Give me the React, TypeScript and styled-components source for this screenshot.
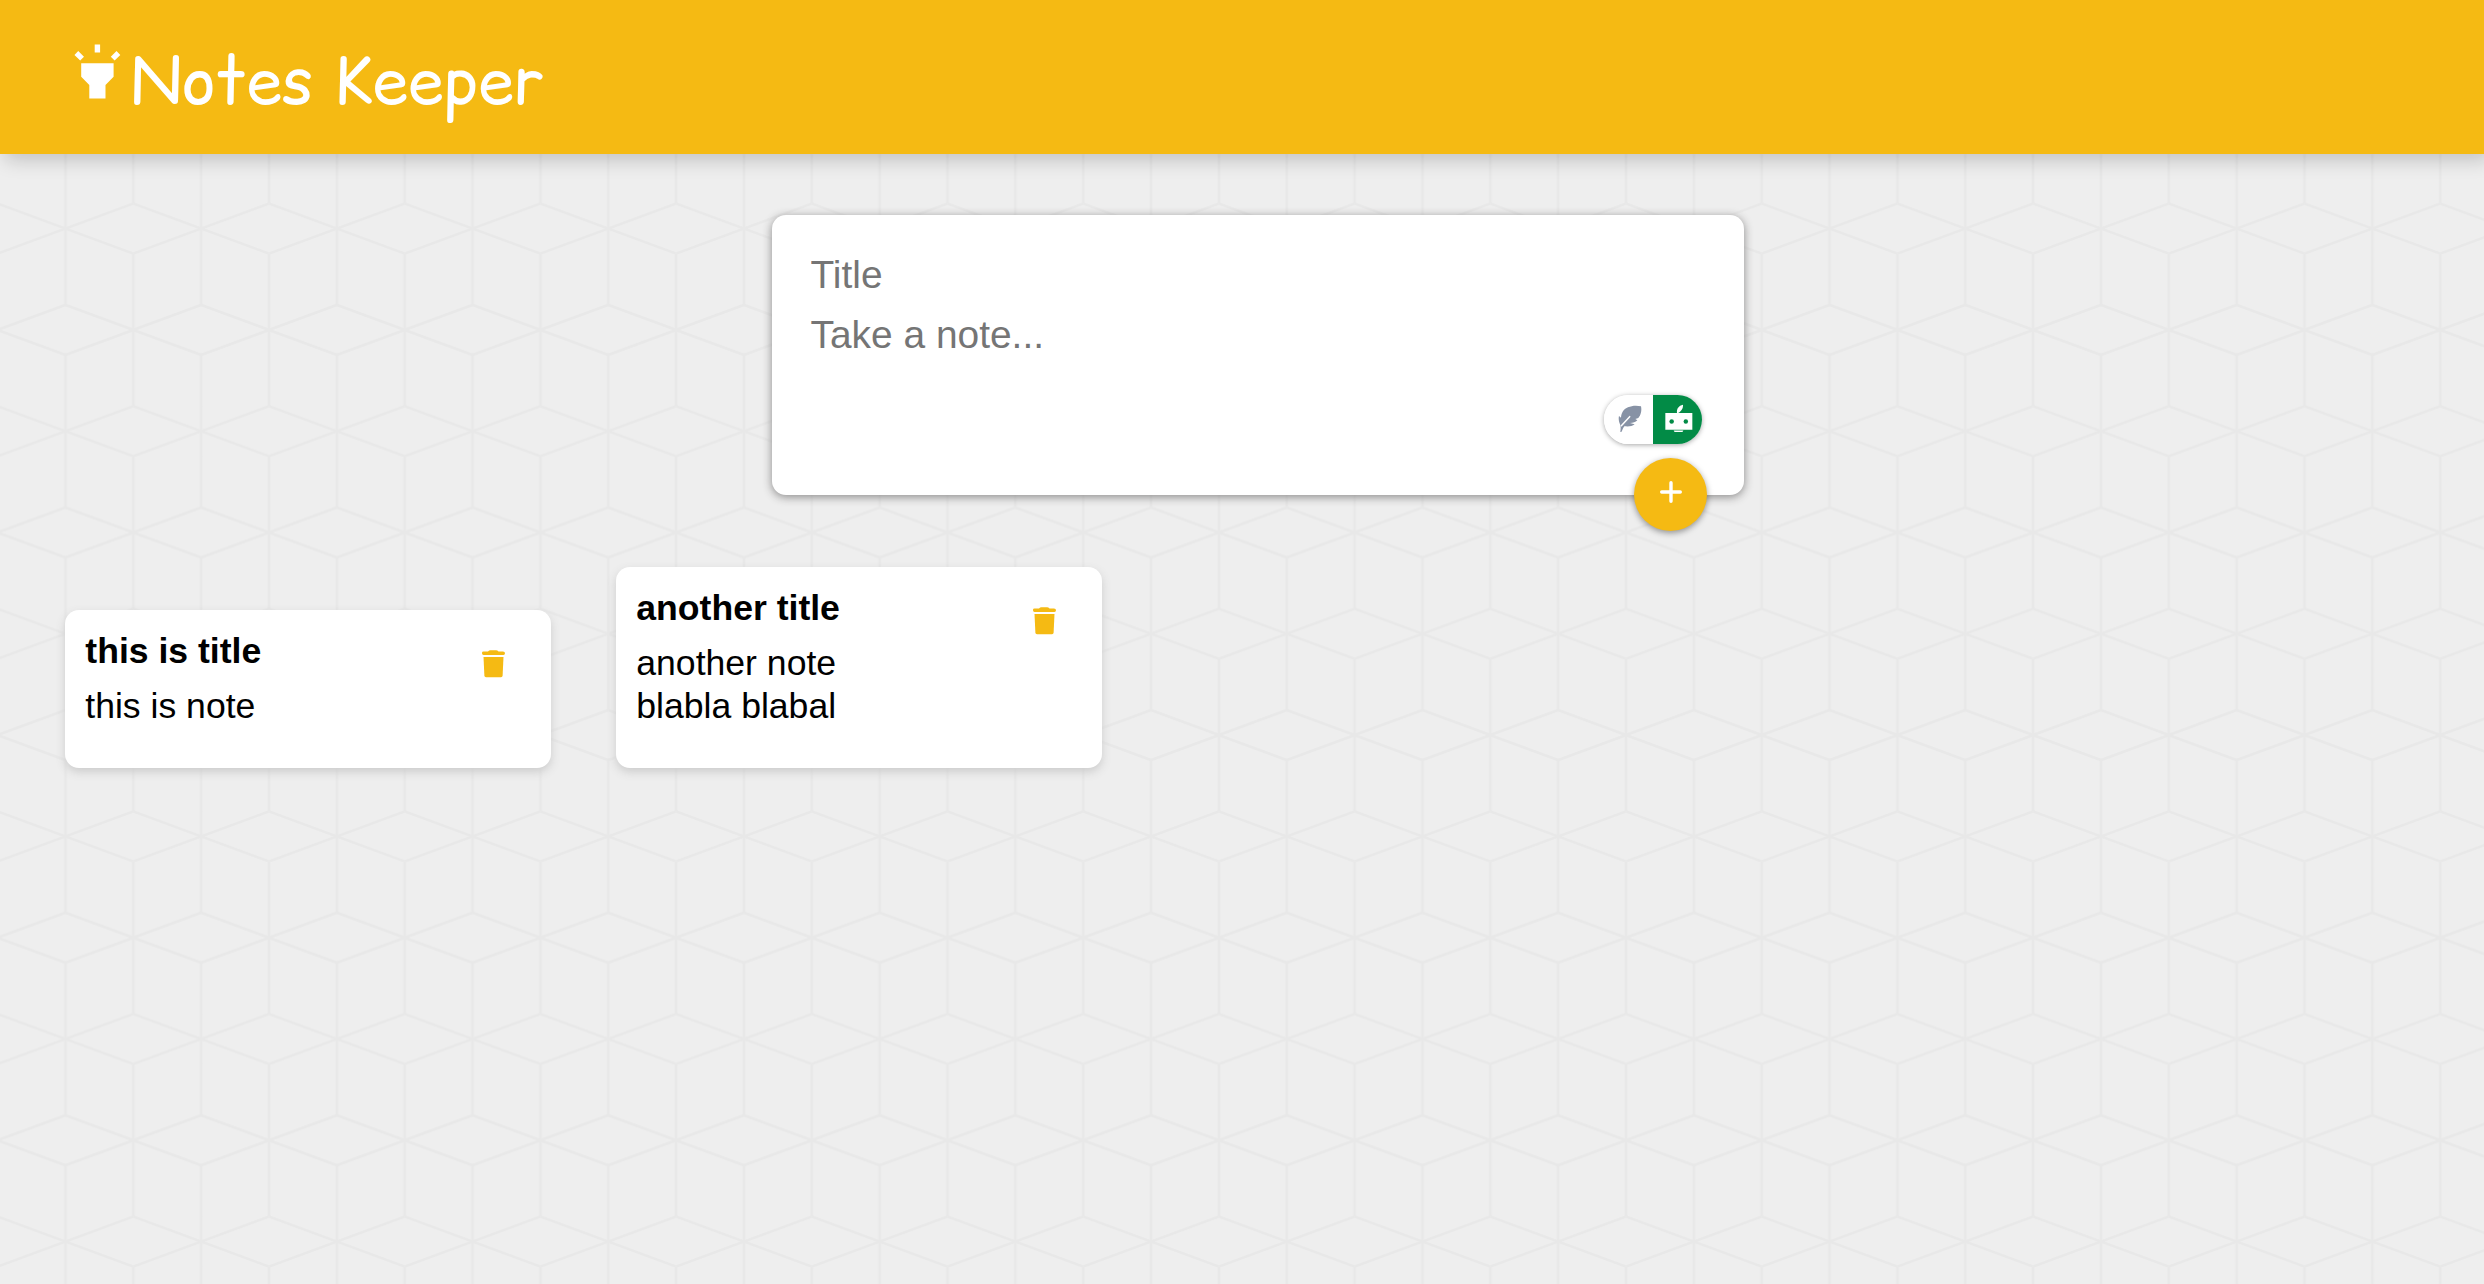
import React from "react";
import styled, { createGlobalStyle } from "styled-components";
import { MdHighlight } from "react-icons/md";

const GlobalStyle = createGlobalStyle`
  * { box-sizing: border-box; }
  html, body, #root { height: 100%; }
  body {
    margin: 0;
    overflow: hidden;
    background: #eee;
    font-family: "Liberation Sans", Arial, sans-serif;
  }
`;

const Page = styled.div`
  position: relative;
  min-height: 100%;
  display: flex;
  flex-direction: column;
`;

const Backdrop = styled.svg`
  position: absolute;
  inset: 0;
  width: 100%;
  height: 100%;
  z-index: -1;
`;

const Header = styled.header`
  display: flex;
  align-items: flex-start;
  height: 154px;
  padding: 38.5px 64.8px 0;
  color: #fff;
  background: #f5ba13;
  box-shadow: 5px 6px 18px rgba(0, 0, 0, 0.19);
`;

const Logo = styled.h1`
  display: flex;
  align-items: flex-start;
  margin: 0;
  font-weight: 400;
`;

const LogoText = styled.span`
  margin: -2px 0 0 0.5px;
  font-family: "Comic Relief", "Comic Sans MS", "Comic Neue", cursive;
  font-size: 64.8px;
  line-height: 88px;
`;

const Form = styled.form`
  position: relative;
  display: flex;
  flex-direction: column;
  width: 972px;
  height: 280px;
  margin: 60.5px 0 0 772px;
  padding: 30px;
  border-radius: 14px;
  background: #fff;
  box-shadow: 0 2px 10px rgb(138, 137, 137);
`;

const fieldStyle = `
  width: 100%;
  border: 0;
  outline: 0;
  padding: 8px 8.5px;
  resize: none;
  background: transparent;
  font-family: inherit;
  font-size: 38.9px;
  line-height: 44px;
  &::placeholder { color: #757575; opacity: 1; }
`;

const TitleInput = styled.input`
  ${fieldStyle}
  height: 60px;
`;

const NoteInput = styled.textarea`
  ${fieldStyle}
  height: 148px;
`;

const Assistant = styled.div`
  position: absolute;
  right: 42.5px;
  top: 180px;
  display: flex;
  width: 98px;
  height: 49px;
  border-radius: 25px;
  overflow: hidden;
  box-shadow: 0 1px 5px rgba(0, 0, 0, 0.35);
`;

const AssistantHalf = styled.span<{ $active?: boolean }>`
  flex: 1;
  background: ${(p) => (p.$active ? "#028b46" : "#fff")};
  svg { display: block; }
`;

const AddButton = styled.button`
  position: absolute;
  right: 36.7px;
  bottom: -36.5px;
  display: flex;
  justify-content: center;
  padding: 22px 0 0;
  width: 73px;
  height: 73px;
  border: 0;
  border-radius: 50%;
  color: #fff;
  background: #f5ba13;
  box-shadow: 0 2px 6px rgba(0, 0, 0, 0.4);
`;

const Notes = styled.main`
  display: flex;
  align-items: flex-end;
  gap: 65px;
  margin: 72.5px 65px 0;
`;

const Card = styled.article`
  display: flex;
  align-items: flex-start;
  justify-content: space-between;
  width: 486px;
  padding: 20.3px 34px 40px 20.3px;
  border-radius: 14px;
  background: #fff;
  box-shadow: 0 4px 10px #ccc;
`;

const CardTitle = styled.h2`
  margin: 0 0 12px;
  font-size: 35.6px;
  line-height: 43px;
`;

const CardBody = styled.p`
  margin: 0;
  font-size: 35.6px;
  line-height: 43px;
  white-space: pre-line;
`;

const DeleteButton = styled.button`
  margin: 16px 0 0;
  padding: 0;
  border: 0;
  background: none;
  svg { display: block; }
`;

const Cubes = () => (
  <Backdrop>
    <defs>
      <pattern id="cubes" width="135.7" height="202.6" patternUnits="userSpaceOnUse" x="-2.4" y="127.3">
        <g fill="none" stroke="#e8e8e8" strokeWidth="2.6">
          <path d="M0 0L67.85 -25L135.7 0L67.85 25ZM0 202.6L67.85 177.6L135.7 202.6L67.85 227.6Z" />
          <path d="M0 76.3L135.7 126.3M0 126.3L135.7 76.3" />
          <path d="M67.85 25V177.6M0 0V76.3M135.7 0V76.3M0 126.3V202.6M135.7 126.3V202.6" />
        </g>
      </pattern>
    </defs>
    <rect width="100%" height="100%" fill="url(#cubes)" />
  </Backdrop>
);

const Plus = () => (
  <svg width="24" height="24" viewBox="0 0 24 24">
    <path d="M12 2.7V21.3M2.7 12H21.3" stroke="#fff" strokeWidth="3.4" strokeLinecap="round" />
  </svg>
);

const Trash = () => (
  <svg width="48" height="48" viewBox="0 0 48 48" fill="#f5ba13">
    <path d="M13 6.8Q13 5.5 14.5 5.5H19Q20 4.2 21.5 4.2H27Q28.5 4.2 29.5 5.5H34Q36 5.5 36 7.2Q36 9 34.5 9H14.5Q13 9 13 7.2Z" />
    <path d="M14.5 11H34.5L33.6 29.8Q33.5 31.2 32 31.2H17Q15.5 31.2 15.4 29.8Z" />
  </svg>
);

const Feather = () => (
  <svg width="49" height="49" viewBox="0 0 147 147">
    <path
      fill="#8792a5"
      d="M49 111C50 102 51 96 48 88C43 76 44 66 45 63L51 68C52 52 60 42 72 37C84 31 100 31 111 34C114 48 110 61 103 69L94 72L100 76C94 82 88 84 78 84L92 88C84 95 72 95 61 94C57 98 56 105 52 111Z"
    />
    <path fill="none" stroke="#fff" strokeWidth="4.5" strokeLinecap="round" d="M52 92L77 65" />
  </svg>
);

const Robot = () => (
  <svg width="49" height="49" viewBox="0 0 147 147">
    <g fill="#fff">
      <path d="M37 54H118V104H37Z" />
      <path d="M62 106.5H91Q90 111 86 111H67Q63 111 62 106.5Z" />
      <path d="M72 54C70 42 77 31 90 29C91 39 85 49 75 54Z" />
    </g>
    <g fill="#028b46">
      <circle cx="56" cy="79.5" r="6.7" />
      <circle cx="98.5" cy="79.5" r="6.7" />
    </g>
  </svg>
);

const notes = [
  { title: "this is title", body: "this is note" },
  { title: "another title", body: "another note\nblabla blabal" },
];

export default function App() {
  return (
    <Page>
      <GlobalStyle />
      <Cubes />
      <Header>
        <Logo>
          <MdHighlight size={64.8} />
          <LogoText>Notes Keeper</LogoText>
        </Logo>
      </Header>
      <Form>
        <TitleInput placeholder="Title" />
        <NoteInput placeholder="Take a note..." />
        <Assistant>
          <AssistantHalf>
            <Feather />
          </AssistantHalf>
          <AssistantHalf $active>
            <Robot />
          </AssistantHalf>
        </Assistant>
        <AddButton type="button">
          <Plus />
        </AddButton>
      </Form>
      <Notes>
        {notes.map((n) => (
          <Card key={n.title}>
            <div>
              <CardTitle>{n.title}</CardTitle>
              <CardBody>{n.body}</CardBody>
            </div>
            <DeleteButton type="button">
              <Trash />
            </DeleteButton>
          </Card>
        ))}
      </Notes>
    </Page>
  );
}
